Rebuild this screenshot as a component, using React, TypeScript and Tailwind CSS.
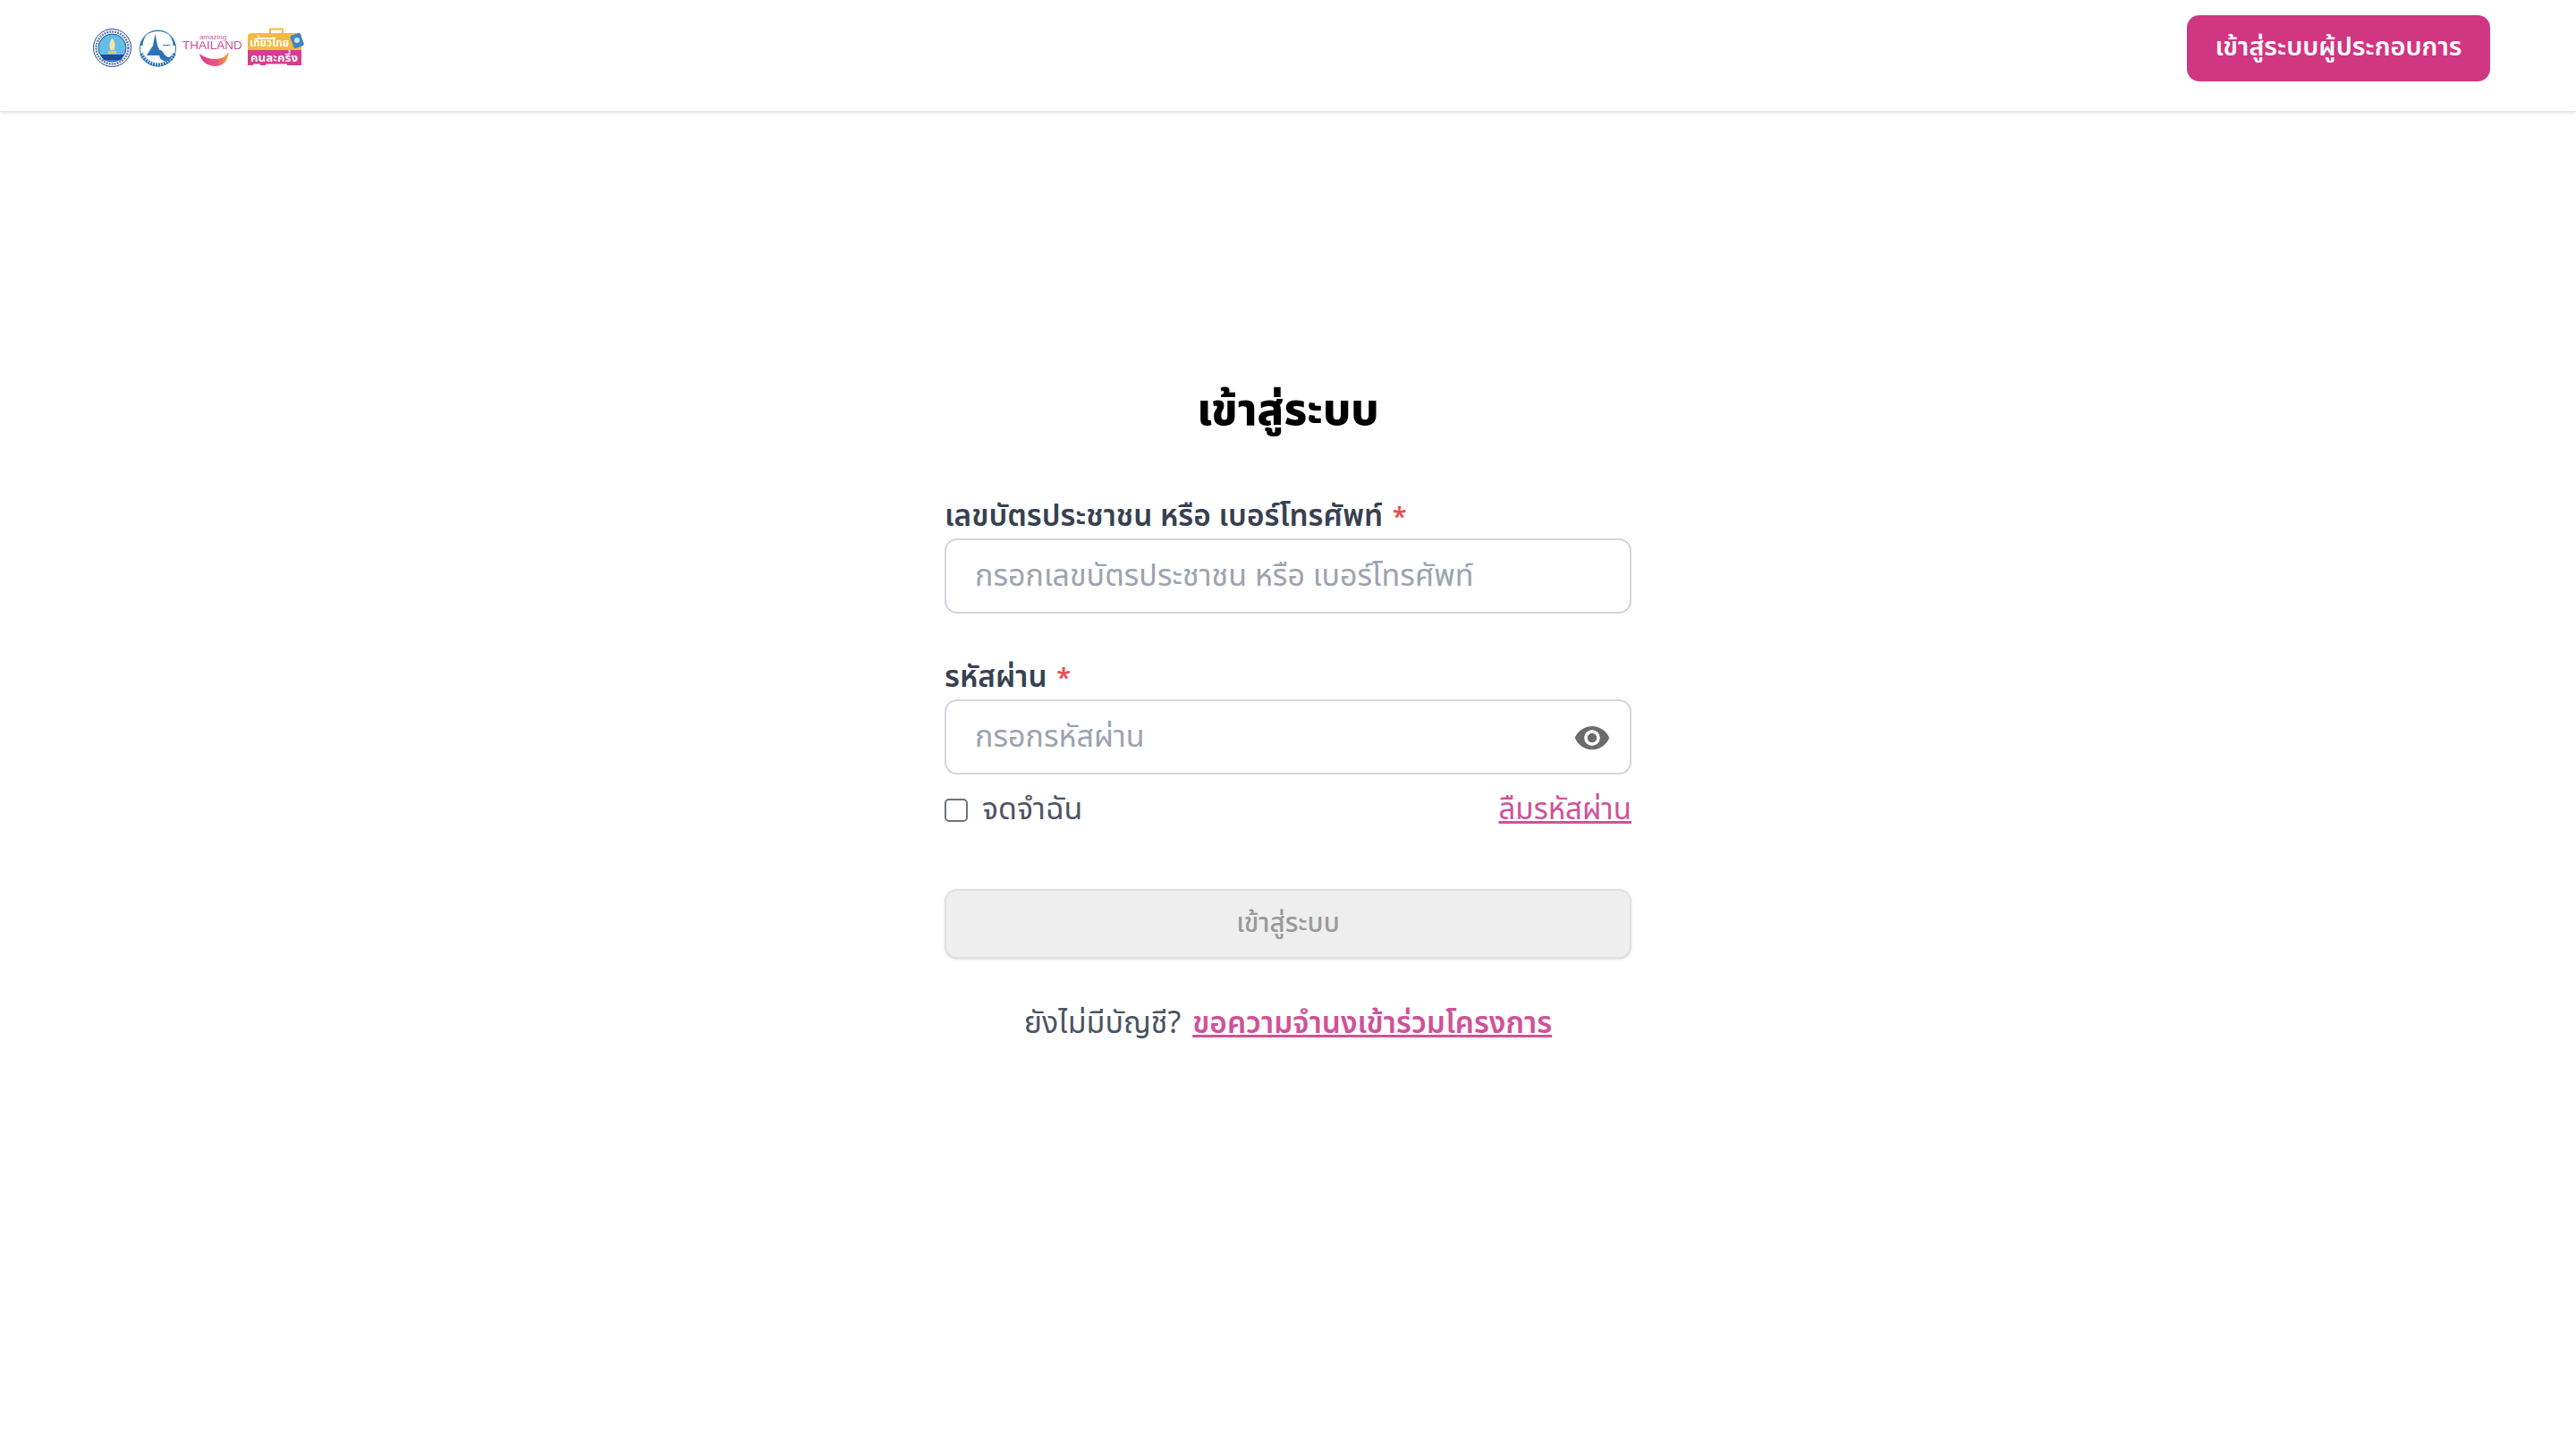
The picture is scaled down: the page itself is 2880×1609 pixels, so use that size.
const font = { fontFamily: '"Noto Sans Thai","Noto Sans Thai Looped","Noto Sans","Noto Sans CJK SC",sans-serif' };

function Logos() {
  return (
    <svg width="240" height="50" viewBox="0 0 240 50" className="block blur-[0.4px]">
      <defs>
        <linearGradient id="swoosh" x1="0" y1="0" x2="1" y2="0">
          <stop offset="0" stopColor="#d63a96" />
          <stop offset="0.6" stopColor="#e8577a" />
          <stop offset="1" stopColor="#f5ad3a" />
        </linearGradient>
      </defs>
      <circle cx="21.5" cy="24.5" r="21" fill="#fff" stroke="#24407f" strokeWidth="1" />
      <circle cx="21.5" cy="24.5" r="18" fill="none" stroke="#5f7fb5" strokeWidth="2.5" strokeDasharray="2 1" />
      <circle cx="21.5" cy="24.5" r="15.5" fill="#63bde6" stroke="#1f4e9c" strokeWidth="1" />
      <path d="M21.5 14c3.5 3 3.5 9 1.8 13h-3.6c-1.700-4-1.700-10 1.800-13z" fill="#f5e6a8" />
      <path d="M8 32h27l-4 6.500H12z" fill="#1c4a98" />
      <rect x="17" y="28" width="9" height="3" fill="#e8c860" />
      <path d="M52.500 22a20.500 20.500 0 0 1 40 0h-3a17 17 0 0 0-34 0z" fill="#2b74b8" />
      <path d="M54 31a20 20 0 0 0 37 0" fill="none" stroke="#2b74b8" strokeWidth="4" strokeDasharray="2 1" />
      <circle cx="72.500" cy="25" r="20" fill="none" stroke="#2b74b8" strokeWidth="1" />
      <path d="M60 33l5-8 2-3 1.500-8 1-5 1 5 1.500 8 2 4v7z" fill="#2b74b8" />
      <path d="M73 27c4-1 5 3 8 6s5 2 7 0c-1 6-7 8-11 5s-2-7-5-8z" fill="#2b74b8" />
      <path d="M78 21h7l3-1-3 2h-7z" fill="#2b74b8" />
      <text x="134" y="15" textAnchor="middle" fontSize="8" fill="#c94f9b" fontFamily="Liberation Sans">amazing</text>
      <text x="133.500" y="26" textAnchor="middle" fontSize="13.500" fill="#c94f9b" fontFamily="Liberation Sans">THAILAND</text>
      <path d="M119 31c2 9 9 14 18 14 9 0 14-7 15-16-4 5-8 8-15 8-7 0-13-2-18-6z" fill="url(#swoosh)" />
      <path d="M198 8V3.500h14V8" fill="none" stroke="#f5b942" strokeWidth="2" />
      <path d="M173 12a4 4 0 0 1 4-4h52a4 4 0 0 1 4 4v15h-60z" fill="#f5b942" />
      <path d="M173 27h60v17h-60z" fill="#d93a92" />
      <path d="M186 13h14l3-1-3 3h-14z" fill="#fff" />
      <text x="175" y="23" fontSize="12" fontWeight="700" fill="#fff" textLength={44} lengthAdjust="spacingAndGlyphs">เที่ยวไทย</text>
      <text x="176" y="40" fontSize="12.500" fontWeight="700" fill="#fff" textLength={53} lengthAdjust="spacingAndGlyphs">คนละครึ่ง</text>
      <rect x="179" y="42.500" width="8" height="1.500" fill="#fff" />
      <rect x="193" y="42.500" width="24" height="1.500" fill="#fff" />
      <rect x="222" y="9" width="12" height="15" rx="2" transform="rotate(-20 228 16)" fill="#3f86c9" />
      <circle cx="228" cy="16" r="3" fill="#cfe4f5" />
    </svg>
  );
}

function Label({ children }: { children: React.ReactNode }) {
  return <label className="block h-[48px] text-[33.4px] leading-[48px] font-semibold text-[#374151]">{children} <span className="ml-0.5 text-[29px] text-[#e05050]">*</span></label>;
}

export default function App() {
  return (
    <div className="min-h-[1609px] bg-white" style={font}>
      <header className="flex h-[124px] items-center justify-between pb-[16px] pl-[104px] pr-[96px] shadow-[0_2px_4px_rgba(0,0,0,0.14)]">
        <Logos />
        <button className="flex h-[74px] w-[339px] items-center justify-center rounded-[14px] bg-[#d13682] text-[29px] font-semibold text-white">เข้าสู่ระบบผู้ประกอบการ</button>
      </header>
      <main className="mx-auto w-[768px] pt-[300px]">
        <h1 className="text-center text-[49px] leading-[72px] font-extrabold text-black">เข้าสู่ระบบ</h1>
        <div className="mt-[58px]">
          <Label>เลขบัตรประชาชน หรือ เบอร์โทรศัพท์</Label>
          <input placeholder="กรอกเลขบัตรประชาชน หรือ เบอร์โทรศัพท์" className="block h-[84px] w-full rounded-[14px] border-2 border-[#d1d5db] px-8 text-[34px] placeholder:text-[#9ca3af]" />
        </div>
        <div className="mt-[48px]">
          <Label>รหัสผ่าน</Label>
          <div className="relative">
            <input placeholder="กรอกรหัสผ่าน" className="block h-[84px] w-full rounded-[14px] border-2 border-[#d1d5db] px-8 text-[34px] placeholder:text-[#9ca3af]" />
            <svg viewBox="0 0 24 24" className="absolute right-[23px] top-[22px] h-[42px] w-[42px]" fill="#6b6b6b"><path d="M12 4.500C7 4.500 2.730 7.610 1 12c1.730 4.390 6 7.500 11 7.500s9.270-3.110 11-7.500c-1.730-4.390-6-7.500-11-7.500zM12 17c-2.760 0-5-2.240-5-5s2.240-5 5-5 5 2.240 5 5-2.240 5-5 5zm0-8c-1.660 0-3 1.340-3 3s1.340 3 3 3 3-1.340 3-3-1.340-3-3-3z" /></svg>
          </div>
        </div>
        <div className="mt-[16px] flex items-center justify-between text-[34px] leading-[48px]">
          <div className="flex items-center gap-4 text-[#4b5563]">
            <span className="h-[26px] w-[26px] rounded-[5px] border-2 border-[#6b7280] bg-white" />
            <span>จดจำฉัน</span>
          </div>
          <a className="text-[33px] text-[#cf5299] underline">ลืมรหัสผ่าน</a>
        </div>
        <button className="mt-[64px] flex h-[78px] w-full items-center justify-center rounded-[14px] border-2 border-[#e0e0e0] bg-[#eeeeee] text-[29.5px] font-medium text-[#9a9a9a] shadow-sm">เข้าสู่ระบบ</button>
        <p className="mt-[49px] text-center text-[34px] leading-[48px] text-[#4b5563]">ยังไม่มีบัญชี? <a className="ml-1 text-[33.4px] font-semibold text-[#cf5299] underline">ขอความจำนงเข้าร่วมโครงการ</a></p>
      </main>
    </div>
  );
}
